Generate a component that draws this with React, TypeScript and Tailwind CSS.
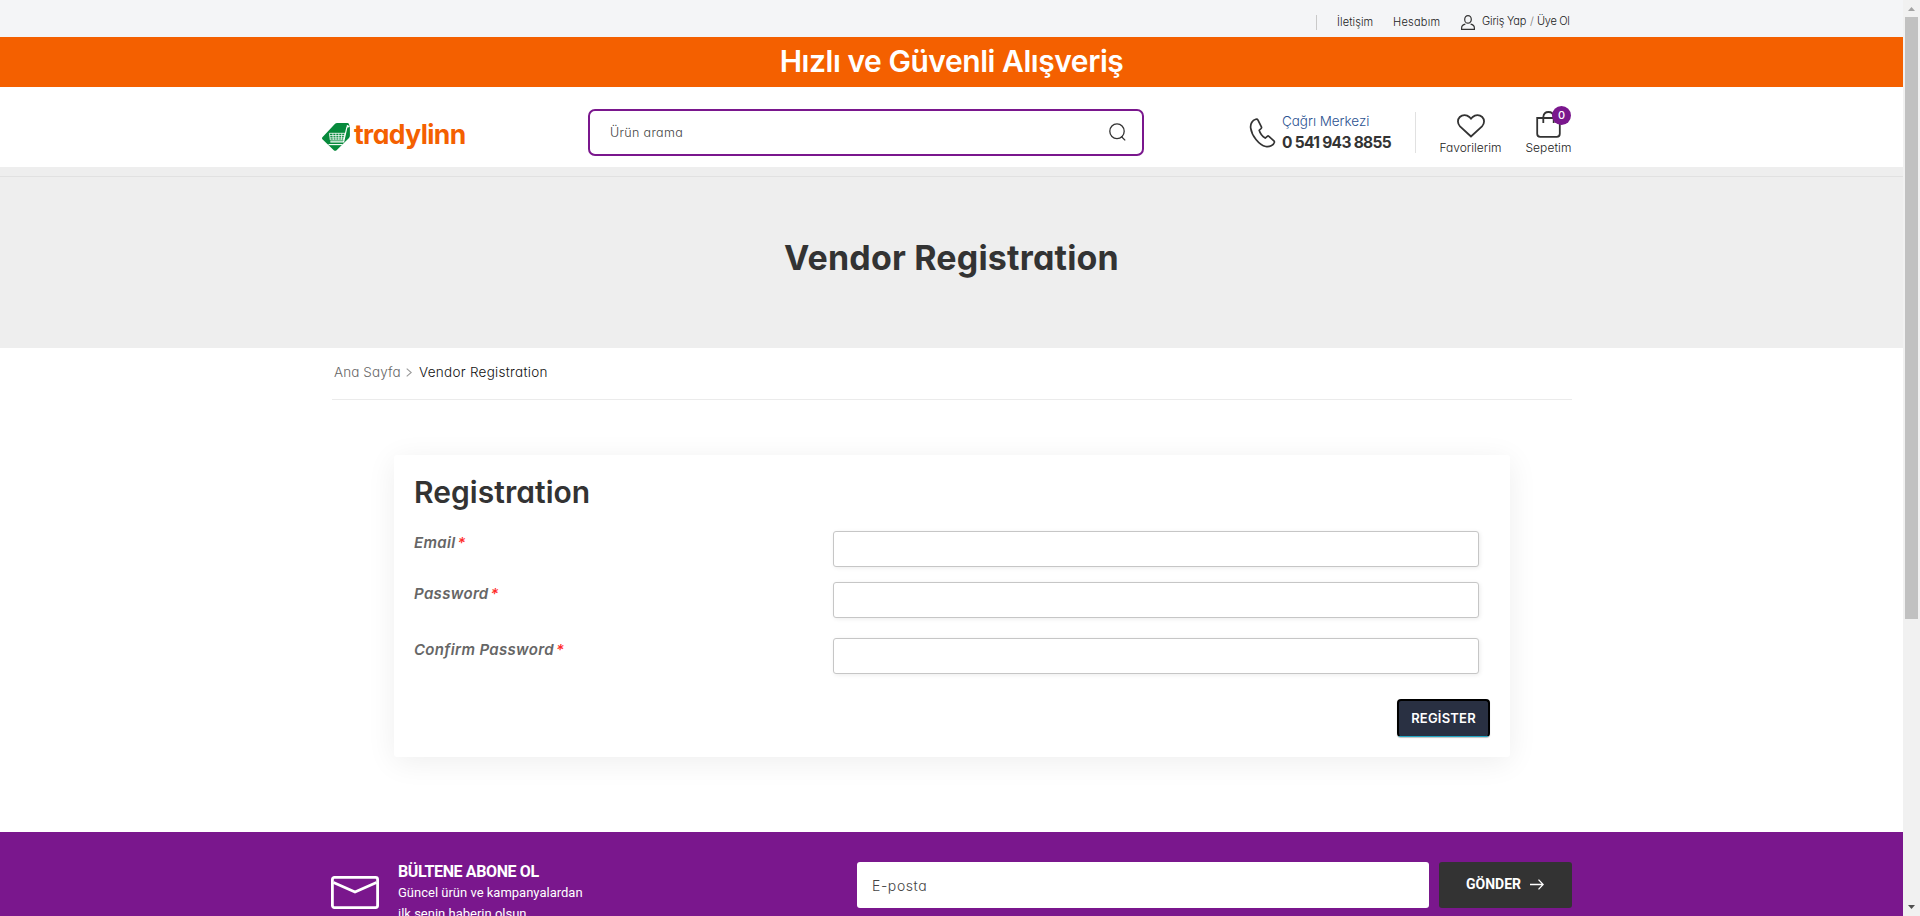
import React from "react";

function TopBar() {
  return (
    <div className="h-[37px] bg-[#f4f5f7]">
      <div className="ml-[332px] flex w-[1240px] items-start justify-end pt-[15px] text-[11px] leading-[14px] font-light whitespace-nowrap text-[#222]">
        <span className="mr-5 h-[15px] w-px bg-[#c9c9c9]" />
        <a className="w-[56px] tracking-[0.100px]">İletişim</a>
        <a className="w-[68px] tracking-[0.250px]">Hesabım</a>
        <svg className="mr-[7px] h-[15px] w-[14px]" viewBox="0 0 14 15" fill="none" stroke="#333" strokeWidth="1.2">
          <ellipse cx="7" cy="4.4" rx="3.3" ry="3.8" />
          <path d="M4.4 9.2C2 9.6.6 11 .6 13.2v1.1h12.8v-1.1c0-2.200-1.400-3.600-3.800-4" />
        </svg>
        <a className="-mt-px w-[48px] tracking-[-0.180px]">Giriş Yap</a>
        <span className="-mt-px w-[7px] text-[#777]">/</span>
        <a className="-mt-px w-[35px] tracking-[-0.300px]">Üye Ol</a>
      </div>
    </div>
  );
}

function Logo() {
  return (
    <div className="flex w-[266px] pt-9">
      <svg className="h-[28px] w-[28px]" viewBox="0 0 28 28" fill="none">
        <path d="M.4 14.200 12.600 1.200Q13.700.1 15.300.1H25.400Q26.600.1 27 1.300L27.900 4V12.600Q27.900 14 27 15L14.600 27.200Q13.200 28.500 11.800 27.200L.4 16.200Q-.4 15.200.4 14.200Z" fill="#078a3c" />
        <path d="M27.500 3.400 24.900 4.200 21.600 18.900H8.300" stroke="#fff" strokeWidth="1.200" />
        <path d="M7.400 10.300H23L21.400 17H8.300ZM7.700 12.600H22.600M8 14.900H22M10.800 10.300 11.300 17M13.800 10.300 14 17M16.800 10.300V17M19.900 10.300 19.200 17" stroke="#fff" strokeWidth=".8" />
        <path d="M6.500 21.600H20.500" stroke="#fff" strokeWidth="1.100" />
        <circle cx="25.600" cy="3" r="1" fill="#fff" />
      </svg>
      <span className="mt-[-5px] ml-1 text-[26.500px] leading-8 font-bold tracking-[-0.580px] text-[#f46000]">tradylinn</span>
    </div>
  );
}

function Header() {
  return (
    <header className="ml-[322px] flex h-[80px] w-[1250px] items-start whitespace-nowrap">
      <Logo />
      <div className="mt-[22px] flex h-[47px] w-[556px] items-center justify-between rounded-[7px] border-2 border-[#7a178d] pr-4 pl-5">
        <span className="pt-0.5 text-[12.500px] font-light tracking-[0.330px] text-[#444]">Ürün arama</span>
        <svg className="-mt-0.5 h-[18px] w-[17px]" viewBox="0 0 17 18" fill="none" stroke="#333" strokeWidth="1.300">
          <ellipse cx="8" cy="8.300" rx="7.200" ry="7.400" />
          <path d="M12.300 13.500 16.200 17.400" />
        </svg>
      </div>
      <svg className="mt-[31px] ml-[105px] h-[30px] w-[27px]" viewBox="0 0 27 30" fill="none" stroke="#333" strokeWidth="1.700" strokeLinejoin="round">
        <path d="M6.800 1.300C3.300 2.300 1.100 6 1.700 10.100 2.700 17.500 9.800 27 16.800 28.500 20.500 29.200 24.600 27.300 25.400 24.200 25.500 23.600 25.300 23.200 24.900 22.800L19.900 18.300C19.400 17.900 18.800 17.900 18.300 18.300L16.200 20.100C13.700 18.600 11 15 10.200 12.300L12.100 10.500C12.600 10 12.700 9.500 12.400 8.900L9 2.100C8.500 1.200 7.800 1 6.800 1.300Z" />
      </svg>
      <div className="ml-[6px] w-[133px] pt-6">
        <div className="text-[13.500px] leading-5 font-light tracking-[-0.050px] text-[#2c5291]">Çağrı Merkezi</div>
        <div className="mt-0.5 text-[15.500px] leading-5 font-bold tracking-[-0.680px] text-[#333]">0 541 943 8855</div>
      </div>
      <span className="mt-[25px] h-[41px] w-px bg-[#e1e1e1]" />
      <div className="ml-[23px] flex w-[63px] flex-col items-center pt-[27px]">
        <svg className="h-[24px] w-[28px]" viewBox="0 0 28 24" fill="none" stroke="#333" strokeWidth="1.800">
          <path d="M14 22.500 3 12.300C.3 9.600.3 5.500 2.800 3 5.500.4 9.700.5 12.300 3L14 4.800 15.700 3C18.300.5 22.500.4 25.200 3 27.700 5.500 27.700 9.600 25 12.300Z" />
        </svg>
        <span className="mt-0.5 text-[12px] leading-4 font-light text-[#222]">Favorilerim</span>
      </div>
      <div className="relative ml-[23px] flex w-[47px] flex-col items-center pt-6">
        <svg className="h-[27px] w-[25px]" viewBox="0 0 25 27" fill="none" stroke="#333" strokeWidth="1.800">
          <path d="M1.200 7H23.800V22.800Q23.800 25.800 20.800 25.800H4.200Q1.200 25.800 1.200 22.800ZM7.300 12V6Q7.800 1 12.500 1T17.700 6V12" />
        </svg>
        <span className="mt-0.5 text-[12px] leading-4 font-light tracking-[0.080px] text-[#222]">Sepetim</span>
        <span className="absolute top-[19px] left-[27px] flex size-[19px] items-center justify-center rounded-full bg-[#7a178d] text-[11px] font-medium text-white">0</span>
      </div>
    </header>
  );
}

function Field({ label, className }: { label: string; className: string }) {
  return (
    <div className={"flex items-start justify-between " + className}>
      <label className="mt-px text-[15px] leading-[22px] font-semibold tracking-[0.330px] text-[#666] italic">
        {label}
        <span className="ml-[2px] font-medium text-[#ff2a2a]">*</span>
      </label>
      <div className="h-[36px] w-[646px] rounded-[3px] border border-[#c6c6c6] bg-white shadow-[1px_1px_4px_rgba(0,0,0,0.080)]" />
    </div>
  );
}

function RegistrationCard() {
  return (
    <section className="ml-[394px] h-[302px] w-[1116px] rounded-[3px] bg-white pt-[17px] pr-[31px] pl-[20px] shadow-[0_5px_30px_rgba(0,0,0,0.070)]">
      <h2 className="h-[59px] text-[30px] leading-[40px] font-semibold tracking-[0.050px] text-[#333]">Registration</h2>
      <Field label="Email" className="mb-[15px]" />
      <Field label="Password" className="mb-5" />
      <Field label="Confirm Password" className="mb-[25px]" />
      <div className="-mr-[11px] flex justify-end">
        <button className="h-[38px] w-[93px] rounded-[4px] border-2 border-b border-black border-b-[#22a7c4] bg-[#293042] text-[13px] font-semibold tracking-[0.200px] text-white shadow-[0_1px_1px_rgba(0,0,0,0.250)]">
          REGİSTER
        </button>
      </div>
    </section>
  );
}

function Newsletter() {
  return (
    <footer className="h-[84px] overflow-hidden bg-[#7a178d] font-[Roboto,sans-serif] text-white">
      <div className="flex pl-[331px] whitespace-nowrap">
        <svg className="mt-[44px] h-[33px] w-[48px]" viewBox="0 0 48 33" fill="none" stroke="#fff" strokeWidth="2.800">
          <rect x="1.400" y="1.400" width="45.200" height="30.200" rx="2" />
          <path d="M2.500 6.500 24 16 45.500 6.500" />
        </svg>
        <div className="mt-[30px] ml-[19px] w-[459px]">
          <div className="text-[16px] leading-5 font-bold tracking-[-0.380px]">BÜLTENE ABONE OL</div>
          <div className="text-[13px] leading-[21px]">Güncel ürün ve kampanyalardan<br />ilk senin haberin olsun.</div>
        </div>
        <div className="mt-[30px] flex h-[46px] w-[572px] items-center rounded-[3px] bg-white pl-[15px] font-[Inter,sans-serif] text-[14px] font-light tracking-[0.600px] text-[#444]">E-posta</div>
        <button className="mt-[30px] ml-[10px] flex h-[46px] w-[133px] items-center rounded-[3px] bg-[#333] pb-0.5 pl-[27px] text-[14px] font-bold">
          GÖNDER
          <svg className="mt-px ml-[9px] h-[11px] w-[14px]" viewBox="0 0 14 11" fill="none" stroke="#fff" strokeWidth="1.300">
            <path d="M0 5.500H13M8.500.6 13.200 5.500 8.500 10.400" />
          </svg>
        </button>
      </div>
    </footer>
  );
}

function Scrollbar() {
  return (
    <div className="flex h-[916px] w-[17px] flex-col items-center bg-[#f1f1f1]">
      <svg className="mt-[7px] mb-[6px] h-1 w-[7px]" viewBox="0 0 7 4"><path d="M0 4 3.500 0 7 4Z" fill="#a3a3a3" /></svg>
      <span className="h-[602px] w-[13px] bg-[#c1c1c1]" />
      <svg className="mt-auto mb-[7px] h-1 w-[7px]" viewBox="0 0 7 4"><path d="M0 0H7L3.500 4Z" fill="#505050" /></svg>
    </div>
  );
}

export default function App() {
  return (
    <div className="flex h-[916px] w-[1920px] overflow-hidden bg-white font-[Inter,sans-serif] [font-feature-settings:'cv11']">
      <div className="w-[1903px] overflow-hidden">
        <TopBar />
        <div className="h-[50px] bg-[#f46000] text-center text-[30px] leading-[49px] font-semibold tracking-[-0.450px] text-white">
          Hızlı ve Güvenli Alışveriş
        </div>
        <Header />
        <div className="h-[181px] bg-[#eee] pt-[9px]">
          <div className="h-px bg-[#e1e1e1]" />
          <h1 className="pt-[61px] text-center text-[34px] leading-10 font-bold tracking-[0.180px] text-[#333]">Vendor Registration</h1>
        </div>
        <nav className="mb-[55px] ml-[332px] flex h-[52px] w-[1240px] items-start border-b border-[#ebebeb] pt-[14px] pl-0.5 text-[13.500px] leading-5 font-light tracking-[0.280px] whitespace-nowrap">
          <a className="w-[72px] tracking-[0.100px] text-[#666]">Ana Sayfa</a>
          <svg className="mt-[6px] mr-[7px] h-[9px] w-[6px]" viewBox="0 0 6 9" fill="none" stroke="#999" strokeWidth="1.100"><path d="M.7.7 5.200 4.500.7 8.300" /></svg>
          <span className="text-[#111]">Vendor Registration</span>
        </nav>
        <RegistrationCard />
        <div className="h-[75px]" />
        <Newsletter />
      </div>
      <Scrollbar />
    </div>
  );
}
